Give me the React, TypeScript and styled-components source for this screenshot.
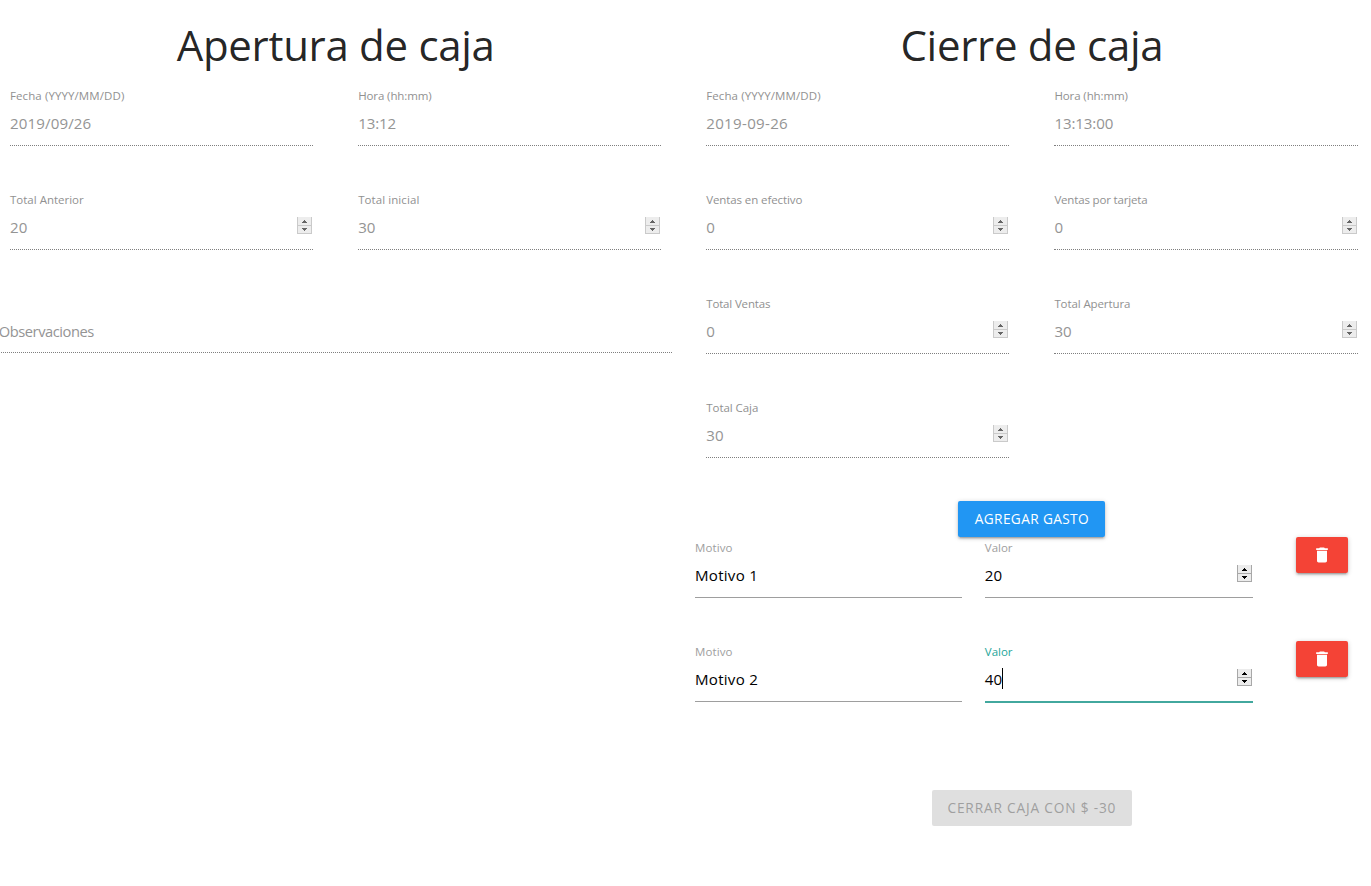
import React from "react";
import styled, { createGlobalStyle, css } from "styled-components";
import { MdDelete } from "react-icons/md";

const GlobalStyle = createGlobalStyle`
  *, *::before, *::after { box-sizing: border-box; }
  html, body { margin: 0; background: #fff; }
  body {
    overflow: hidden;
    font-family: "Open Sans", "Noto Sans", sans-serif;
    font-size: 15px;
    color: rgba(0, 0, 0, 0.87);
  }
`;

const Viewport = styled.div`
  width: 100%;
  height: 886px;
  overflow: hidden;
`;

const Page = styled.main`
  display: flex;
  width: 1392.5px;
  margin-left: -12.5px;
`;

const Panel = styled.section`
  width: 696.25px;
  flex: none;
  display: flex;
  flex-direction: column;
`;

const Title = styled.h3`
  margin: 0;
  height: 86px;
  padding-top: 17px;
  text-align: center;
  font-weight: 400;
  font-size: 42px;
  line-height: 56px;
  letter-spacing: -0.3px;
  white-space: nowrap;
`;

const FieldGrid = styled.div`
  display: grid;
  grid-template-columns: 1fr 1fr;
`;

type Tone = "disabled" | "normal" | "focused";

const FieldBox = styled.div<{ $gutter: number }>`
  height: 104px;
  margin: 0 ${(p) => p.$gutter}px;
`;

const Label = styled.label<{ $tone: Tone; $tracking: number }>`
  display: block;
  height: 20px;
  font-size: 11.5px;
  line-height: 20px;
  letter-spacing: ${(p) => p.$tracking}px;
  white-space: nowrap;
  color: ${(p) => (p.$tone === "focused" ? "#26a69a" : p.$tone === "normal" ? "#9e9e9e" : "#919191")};
`;

const lines = {
  disabled: css`border-bottom: 1px dotted rgba(0, 0, 0, 0.5);`,
  normal: css`border-bottom: 1px solid #9e9e9e;`,
  focused: css`border-bottom: 2px solid #42a89e;`,
};

const Value = styled.div<{ $tone: Tone; $tracking: number }>`
  display: flex;
  justify-content: space-between;
  height: ${(p) => (p.$tone === "focused" ? 41 : 40)}px;
  padding-top: 7px;
  font-size: 15.1px;
  line-height: 21px;
  letter-spacing: ${(p) => p.$tracking}px;
  white-space: nowrap;
  color: ${(p) => (p.$tone === "disabled" ? "#949494" : "#000")};
  ${(p) => lines[p.$tone]}
`;

const Typed = styled.span`
  display: flex;
`;

const Caret = styled.i`
  width: 1px;
  height: 21px;
  margin-top: -1px;
  background: #000;
`;

const SpinnerIcon = styled.svg<{ $dim: boolean }>`
  width: 15px;
  height: 17px;
  margin-right: 0.95px;
  opacity: ${(p) => (p.$dim ? 0.6 : 1)};
`;

function Spinner({ dim }: { dim: boolean }) {
  return (
    <SpinnerIcon $dim={dim} viewBox="0 0 15 17" shapeRendering="crispEdges">
      <rect width="15" height="17" fill={dim ? "#e2e2e2" : "#ececec"} />
      <path d="M0 0h1v17H0zM14 0h1v17h-1zM0 8h15v1H0zM0 16h15v1H0z" fill="#a8a8a8" />
      <path d="M7 3h1v1h1v1h1v1H5V5h1V4h1zM5 11h5v1H9v1H8v1H7v-1H6v-1H5z" fill="#000" />
    </SpinnerIcon>
  );
}

interface FieldProps {
  label: string;
  value: string;
  numeric?: boolean;
  tone?: Tone;
  gutter?: number;
  labelTracking?: number;
  valueTracking?: number;
}

function Field({
  label,
  value,
  numeric = false,
  tone = "disabled",
  gutter = 22.5,
  labelTracking = 0,
  valueTracking = 0,
}: FieldProps) {
  return (
    <FieldBox $gutter={gutter}>
      <Label $tone={tone} $tracking={labelTracking}>
        {label}
      </Label>
      <Value $tone={tone} $tracking={valueTracking}>
        <Typed>
          {value}
          {tone === "focused" && <Caret />}
        </Typed>
        {numeric && <Spinner dim={tone === "disabled"} />}
      </Value>
    </FieldBox>
  );
}

const Notes = styled.div`
  height: 59px;
  margin: 0 12px 0 11.25px;
  padding-top: 26px;
  line-height: 22px;
  font-size: 14.7px;
  letter-spacing: -0.45px;
  color: #949494;
  ${lines.disabled}
`;

const Button = styled.button<{ $kind: "add" | "remove" | "close" }>`
  display: flex;
  align-items: center;
  justify-content: center;
  align-self: center;
  flex: none;
  height: 36px;
  padding: 0 0 2px;
  border: 0;
  border-radius: 2px;
  font-family: inherit;
  font-size: 13.7px;
  letter-spacing: 0.35px;
  white-space: nowrap;
  color: #fff;
  box-shadow: 0 2px 2px 0 rgba(0, 0, 0, 0.14), 0 3px 1px -2px rgba(0, 0, 0, 0.12),
    0 1px 5px 0 rgba(0, 0, 0, 0.2);
  ${(p) => p.$kind === "add" && css`width: 147px; margin-top: -1px; background: #2196f3;`}
  ${(p) => p.$kind === "remove" && css`width: 52px; padding: 0; background: #f44336;`}
  ${(p) =>
    p.$kind === "close" &&
    css`
      width: 200px;
      margin-top: 45px;
      background: #dfdfdf;
      color: #9f9f9f;
      box-shadow: none;
      letter-spacing: 0.82px;
    `}
`;

const ExpenseRow = styled.div`
  display: grid;
  grid-template-columns: 289.8px 290.3px 1fr;
  align-items: start;
  height: 104px;

  & > ${FieldBox} {
    padding-top: 1px;
  }
`;

const RemoveCell = styled.div`
  display: flex;
  justify-content: center;
`;

const expenses: { reason: string; amount: string; active: boolean }[] = [
  { reason: "Motivo 1", amount: "20", active: false },
  { reason: "Motivo 2", amount: "40", active: true },
];

export default function App() {
  return (
    <Viewport>
      <GlobalStyle />
      <Page>
        <Panel>
          <Title>Apertura de caja</Title>
          <FieldGrid>
            <Field label="Fecha (YYYY/MM/DD)" value="2019/09/26" labelTracking={0.1} valueTracking={0.12} />
            <Field label="Hora (hh:mm)" value="13:12" labelTracking={-0.1} valueTracking={-0.1} />
            <Field label="Total Anterior" value="20" numeric />
            <Field label="Total inicial" value="30" numeric labelTracking={0.08} />
          </FieldGrid>
          <Notes>Observaciones</Notes>
        </Panel>
        <Panel>
          <Title>Cierre de caja</Title>
          <FieldGrid>
            <Field label="Fecha (YYYY/MM/DD)" value="2019-09-26" labelTracking={0.1} valueTracking={0.3} />
            <Field label="Hora (hh:mm)" value="13:13:00" labelTracking={-0.1} valueTracking={-0.1} />
            <Field label="Ventas en efectivo" value="0" numeric labelTracking={-0.1} />
            <Field label="Ventas por tarjeta" value="0" numeric labelTracking={-0.16} />
            <Field label="Total Ventas" value="0" numeric labelTracking={-0.16} />
            <Field label="Total Apertura" value="30" numeric labelTracking={-0.1} />
            <Field label="Total Caja" value="30" numeric labelTracking={-0.05} />
          </FieldGrid>
          <Button $kind="add">AGREGAR GASTO</Button>
          {expenses.map((e) => (
            <ExpenseRow key={e.reason}>
              <Field
                label="Motivo"
                value={e.reason}
                tone="normal"
                gutter={11.25}
                labelTracking={0.1}
                valueTracking={0.25}
              />
              <Field label="Valor" value={e.amount} numeric tone={e.active ? "focused" : "normal"} gutter={11.25} />
              <RemoveCell>
                <Button $kind="remove" aria-label="Eliminar">
                  <MdDelete size={20} />
                </Button>
              </RemoveCell>
            </ExpenseRow>
          ))}
          <Button $kind="close">CERRAR CAJA CON $ -30</Button>
        </Panel>
      </Page>
    </Viewport>
  );
}
